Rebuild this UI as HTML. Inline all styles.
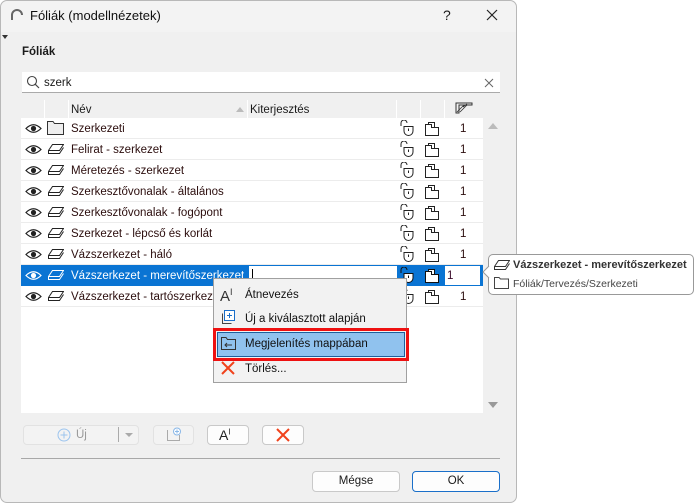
<!DOCTYPE html><html><head><meta charset="utf-8"><style>
*{box-sizing:border-box;margin:0;padding:0}
body{width:695px;height:504px;background:#fff;font-family:"Liberation Sans",sans-serif;font-size:11.5px;color:#1a1a1a;position:relative;overflow:hidden}
.a{position:absolute}
.dlg{left:0;top:0;width:517px;height:503px;background:#f0f0f0;border:1px solid #b8b8b8;border-radius:7px}
.title{left:1px;top:1px;width:515px;height:31px;background:#f3f3f3;border-radius:7px 7px 0 0}
.row{position:absolute;left:21px;width:462px;height:21px;border-bottom:1px solid #ececec;color:#2b0d0d}
.row .t{position:absolute;left:50px;top:5px}
.row .n{position:absolute;left:439px;top:5px}
.btn{position:absolute;border:1px solid #c9c9c9;border-radius:4px;background:#fdfdfd}
.mi{position:absolute;left:32px;font-size:11.5px;color:#111}
</style></head><body>
<div class="a dlg"></div>
<div class="a title"></div>
<svg class="a" style="left:11px;top:9px" width="12" height="12"><path d="M1 11V6a5 5 0 0 1 10 0" fill="none" stroke="#666" stroke-width="2"/></svg>
<div class="a" style="left:30px;top:8px;font-size:13px;color:#111">Fóliák (modellnézetek)</div>
<div class="a" style="left:443px;top:7px;font-size:14px">?</div>
<svg class="a" style="left:486px;top:9px" width="12" height="12"><path d="M1 1L11 11M11 1L1 11" stroke="#222" stroke-width="1.2"/></svg>
<div class="a" style="left:2px;top:35px;width:0;height:0;border-left:3px solid transparent;border-right:3px solid transparent;border-top:4px solid #333"></div>
<div class="a" style="left:22px;top:46px;font-weight:bold;font-size:11.5px">Fóliák</div>
<div class="a" style="left:22px;top:72px;width:478px;height:21px;background:#fff;border-bottom:1px solid #aaa"></div>
<svg class="a" style="left:26px;top:75px" width="15" height="15"><circle cx="6" cy="6" r="4.5" fill="none" stroke="#444" stroke-width="1.1"/><path d="M9.3 9.3L13 13" stroke="#444" stroke-width="1.2"/></svg>
<div class="a" style="left:44px;top:77px">szerk</div>
<svg class="a" style="left:484px;top:78px" width="10" height="10"><path d="M1 1L9 9M9 1L1 9" stroke="#666" stroke-width="1"/></svg>
<div class="a" style="left:21px;top:100px;width:462px;height:313px;background:#fff"></div>
<div class="a" style="left:483px;top:117px;width:17px;height:296px;background:#f0f0f0"></div>
<div class="a" style="left:488px;top:123px;border-left:5px solid transparent;border-right:5px solid transparent;border-bottom:6px solid #bbb"></div>
<div class="a" style="left:488px;top:402px;border-left:5px solid transparent;border-right:5px solid transparent;border-top:6px solid #999"></div>
<div class="a" style="left:21px;top:100px;width:462px;height:18px;background:#f0f0f0"></div>
<div class="a" style="left:44px;top:100px;width:1px;height:18px;background:#fff"></div>
<div class="a" style="left:68px;top:100px;width:1px;height:18px;background:#fff"></div>
<div class="a" style="left:247px;top:100px;width:1px;height:18px;background:#fff"></div>
<div class="a" style="left:396px;top:100px;width:1px;height:18px;background:#fff"></div>
<div class="a" style="left:420px;top:100px;width:1px;height:18px;background:#fff"></div>
<div class="a" style="left:444px;top:100px;width:1px;height:18px;background:#fff"></div>
<div class="a" style="left:71px;top:104px">Név</div>
<div class="a" style="left:236px;top:107px;border-left:4px solid transparent;border-right:4px solid transparent;border-bottom:5px solid #bbb"></div>
<div class="a" style="left:250px;top:104px">Kiterjesztés</div>
<svg class="a" style="left:455px;top:102px" width="18" height="12"><path d="M1 11V1H17V3H4V11Z" fill="none" stroke="#333"/><path d="M2 10L9 3M5 10L12 3M8 5L12 2" stroke="#333" stroke-width=".8"/></svg>
<div id="rows"></div>
<script>
var names=["Szerkezeti","Felirat - szerkezet","Méretezés - szerkezet","Szerkesztővonalak - általános","Szerkesztővonalak - fogópont","Szerkezet - lépcső és korlát","Vázszerkezet - háló","Vázszerkezet - merevítőszerkezet","Vázszerkezet - tartószerkezet"];
var h="";
for(var i=0;i<9;i++){var y=118+i*21;var sel=i==7;
var c=sel?"#fff":"#222";
h+='<div class="row" style="top:'+y+'px;'+(sel?'background:#0a74d3;color:#fff;border-bottom-color:#0a74d3':'')+'">';
h+='<svg style="position:absolute;left:4px;top:5px" width="17" height="11"><path d="M1 5.5Q8.5 -2 16 5.5Q8.5 13 1 5.5Z" fill="none" stroke="'+c+'" stroke-width="1.2"/><circle cx="8.5" cy="5.5" r="2.6" fill="'+c+'"/></svg>';
if(i==0)h+='<svg style="position:absolute;left:26px;top:3px" width="17" height="14"><path d="M.5 13.5V.5H6L7.5 2.5H16.5V13.5Z" fill="#eee" stroke="#333"/></svg>';
else h+='<svg style="position:absolute;left:27px;top:5px" width="16" height="10"><path d="M4.5 .5H15.5L11.5 6.5H.5Z" fill="none" stroke="'+c+'"/><path d="M.5 6.5V9.5H11.5L15.5 3.5" fill="none" stroke="'+c+'"/></svg>';
h+='<div class="t">'+names[i]+'</div>';
if(sel){h+='<div style="position:absolute;left:228px;top:1px;width:148px;height:19px;background:#fff"></div><div style="position:absolute;left:231px;top:4px;width:1px;height:13px;background:#000"></div><div style="position:absolute;left:424px;top:1px;width:35px;height:19px;background:#fff;color:#3a0a2a;padding:4px 2px">1</div>';}
var lc=sel?"#111":"#222";
h+='<svg style="position:absolute;left:378px;top:2px" width="17" height="16"><path d="M2 6V3a3 3 0 0 1 6 0" fill="none" stroke="'+lc+'"/><path d="M5 6.5H14V11a4.5 4.5 0 0 1-9 0Z" fill="'+(sel?"#fff":"none")+'" stroke="'+lc+'"/><path d="M9.5 8.5V11" stroke="'+lc+'"/></svg>';
h+='<svg style="position:absolute;left:404px;top:3px" width="15" height="15"><path d="M.5 3.5V14.5H13.5V6.5H9.5V1.5H3.5V3.5Z" fill="'+(sel?"#fff":"none")+'" stroke="'+lc+'"/><path d="M3.5 3.5H6.5V6.5H9.5" fill="none" stroke="'+lc+'"/></svg>';
if(!sel)h+='<div class="n">1</div>';
h+='</div>';}
document.getElementById("rows").innerHTML=h;
</script>
<div class="a" style="left:213px;top:278px;width:194px;height:105px;background:#f2f2f2;border:1px solid #a0a0a0"></div>
<div class="a" style="left:213px;top:328px;width:196px;height:33px;border:3px solid #ee1111"></div>
<div class="a" style="left:217px;top:332px;width:188px;height:25px;background:#90c2ee;border:1px solid #1d5f9c"></div>
<div class="a" style="left:220px;top:287px;font-size:15px;color:#333">A<sup style="font-size:9px">I</sup></div>
<div class="a mi" style="left:245px;top:289px">Átnevezés</div>
<svg class="a" style="left:220px;top:310px" width="16" height="16"><rect x="4.5" y=".5" width="10" height="10" fill="#fff" stroke="#1a6fc9"/><path d="M9.5 3V8M7 5.5H12" stroke="#1a6fc9"/><path d="M2.5 3.5V13.5H11.5" fill="none" stroke="#444"/></svg>
<div class="a mi" style="left:245px;top:313px">Új a kiválasztott alapján</div>
<svg class="a" style="left:221px;top:337px" width="15" height="13"><path d="M.5 12.5V.5H5L6.5 2.5H14.5V12.5Z" fill="none" stroke="#333"/><path d="M4 8H11M6 6L4 8L6 10" fill="none" stroke="#333"/></svg>
<div class="a mi" style="left:245px;top:338px">Megjelenítés mappában</div>
<svg class="a" style="left:221px;top:361px" width="14" height="14"><path d="M1 1L13 13M13 1L1 13" stroke="#f0421c" stroke-width="2"/></svg>
<div class="a mi" style="left:245px;top:363px">Törlés...</div>
<div class="a" style="left:488px;top:254px;width:206px;height:41px;background:#fff;border:1px solid #999;border-radius:5px"></div>
<svg class="a" style="left:482px;top:266px" width="8" height="12"><path d="M7 0L1 6L7 12" fill="#fff" stroke="#999"/></svg>
<svg class="a" style="left:494px;top:260px" width="16" height="10"><path d="M4.5 .5H15.5L11.5 6.5H.5Z" fill="none" stroke="#333"/><path d="M.5 6.5V9.5H11.5L15.5 3.5" fill="none" stroke="#333"/></svg>
<div class="a" style="left:513px;top:259px;font-weight:bold;color:#333;font-size:11px">Vázszerkezet - merevítőszerkezet</div>
<svg class="a" style="left:494px;top:277px" width="15" height="12"><path d="M.5 11.5V.5H5L6.5 2H14.5V11.5Z" fill="none" stroke="#444"/></svg>
<div class="a" style="left:513px;top:278px;color:#444;font-size:10.5px">Fóliák/Tervezés/Szerkezeti</div>
<div class="btn" style="left:23px;top:425px;width:116px;height:20px;background:#f3f3f3;border-color:#e2e2e2"></div>
<svg class="a" style="left:57px;top:428px" width="14" height="14"><circle cx="7" cy="7" r="6" fill="none" stroke="#9cc4ee"/><path d="M7 3.5V10.5M3.5 7H10.5" stroke="#9cc4ee"/></svg>
<div class="a" style="left:76px;top:429px;color:#999">Új</div>
<div class="a" style="left:118px;top:427px;width:1px;height:15px;background:#aaa"></div>
<div class="a" style="left:125px;top:433px;border-left:4px solid transparent;border-right:4px solid transparent;border-top:4px solid #aaa"></div>
<div class="btn" style="left:153px;top:425px;width:41px;height:20px;background:#f3f3f3;border-color:#e2e2e2"></div>
<svg class="a" style="left:166px;top:427px" width="16" height="15"><path d="M1.5 3V13.5H13.5V8" fill="none" stroke="#aaa"/><circle cx="11" cy="4.5" r="3.5" fill="#fff" stroke="#8ab8e8"/><path d="M11 2.5V6.5M9 4.5H13" stroke="#8ab8e8"/></svg>
<div class="btn" style="left:207px;top:425px;width:42px;height:20px"></div>
<div class="a" style="left:219px;top:427px;font-size:14px;color:#222">A<sup style="font-size:8px">I</sup></div>
<div class="btn" style="left:262px;top:425px;width:42px;height:20px"></div>
<svg class="a" style="left:276px;top:428px" width="14" height="14"><path d="M1 1L13 13M13 1L1 13" stroke="#f0421c" stroke-width="2"/></svg>
<div class="a" style="left:21px;top:458px;width:479px;height:1px;background:#a8a8a8"></div>
<div class="btn" style="left:312px;top:471px;width:88px;height:21px;text-align:center;padding-top:3px">Mégse</div>
<div class="btn" style="left:412px;top:471px;width:88px;height:21px;text-align:center;padding-top:3px;border-color:#1a6fc9">OK</div>
</body></html>
